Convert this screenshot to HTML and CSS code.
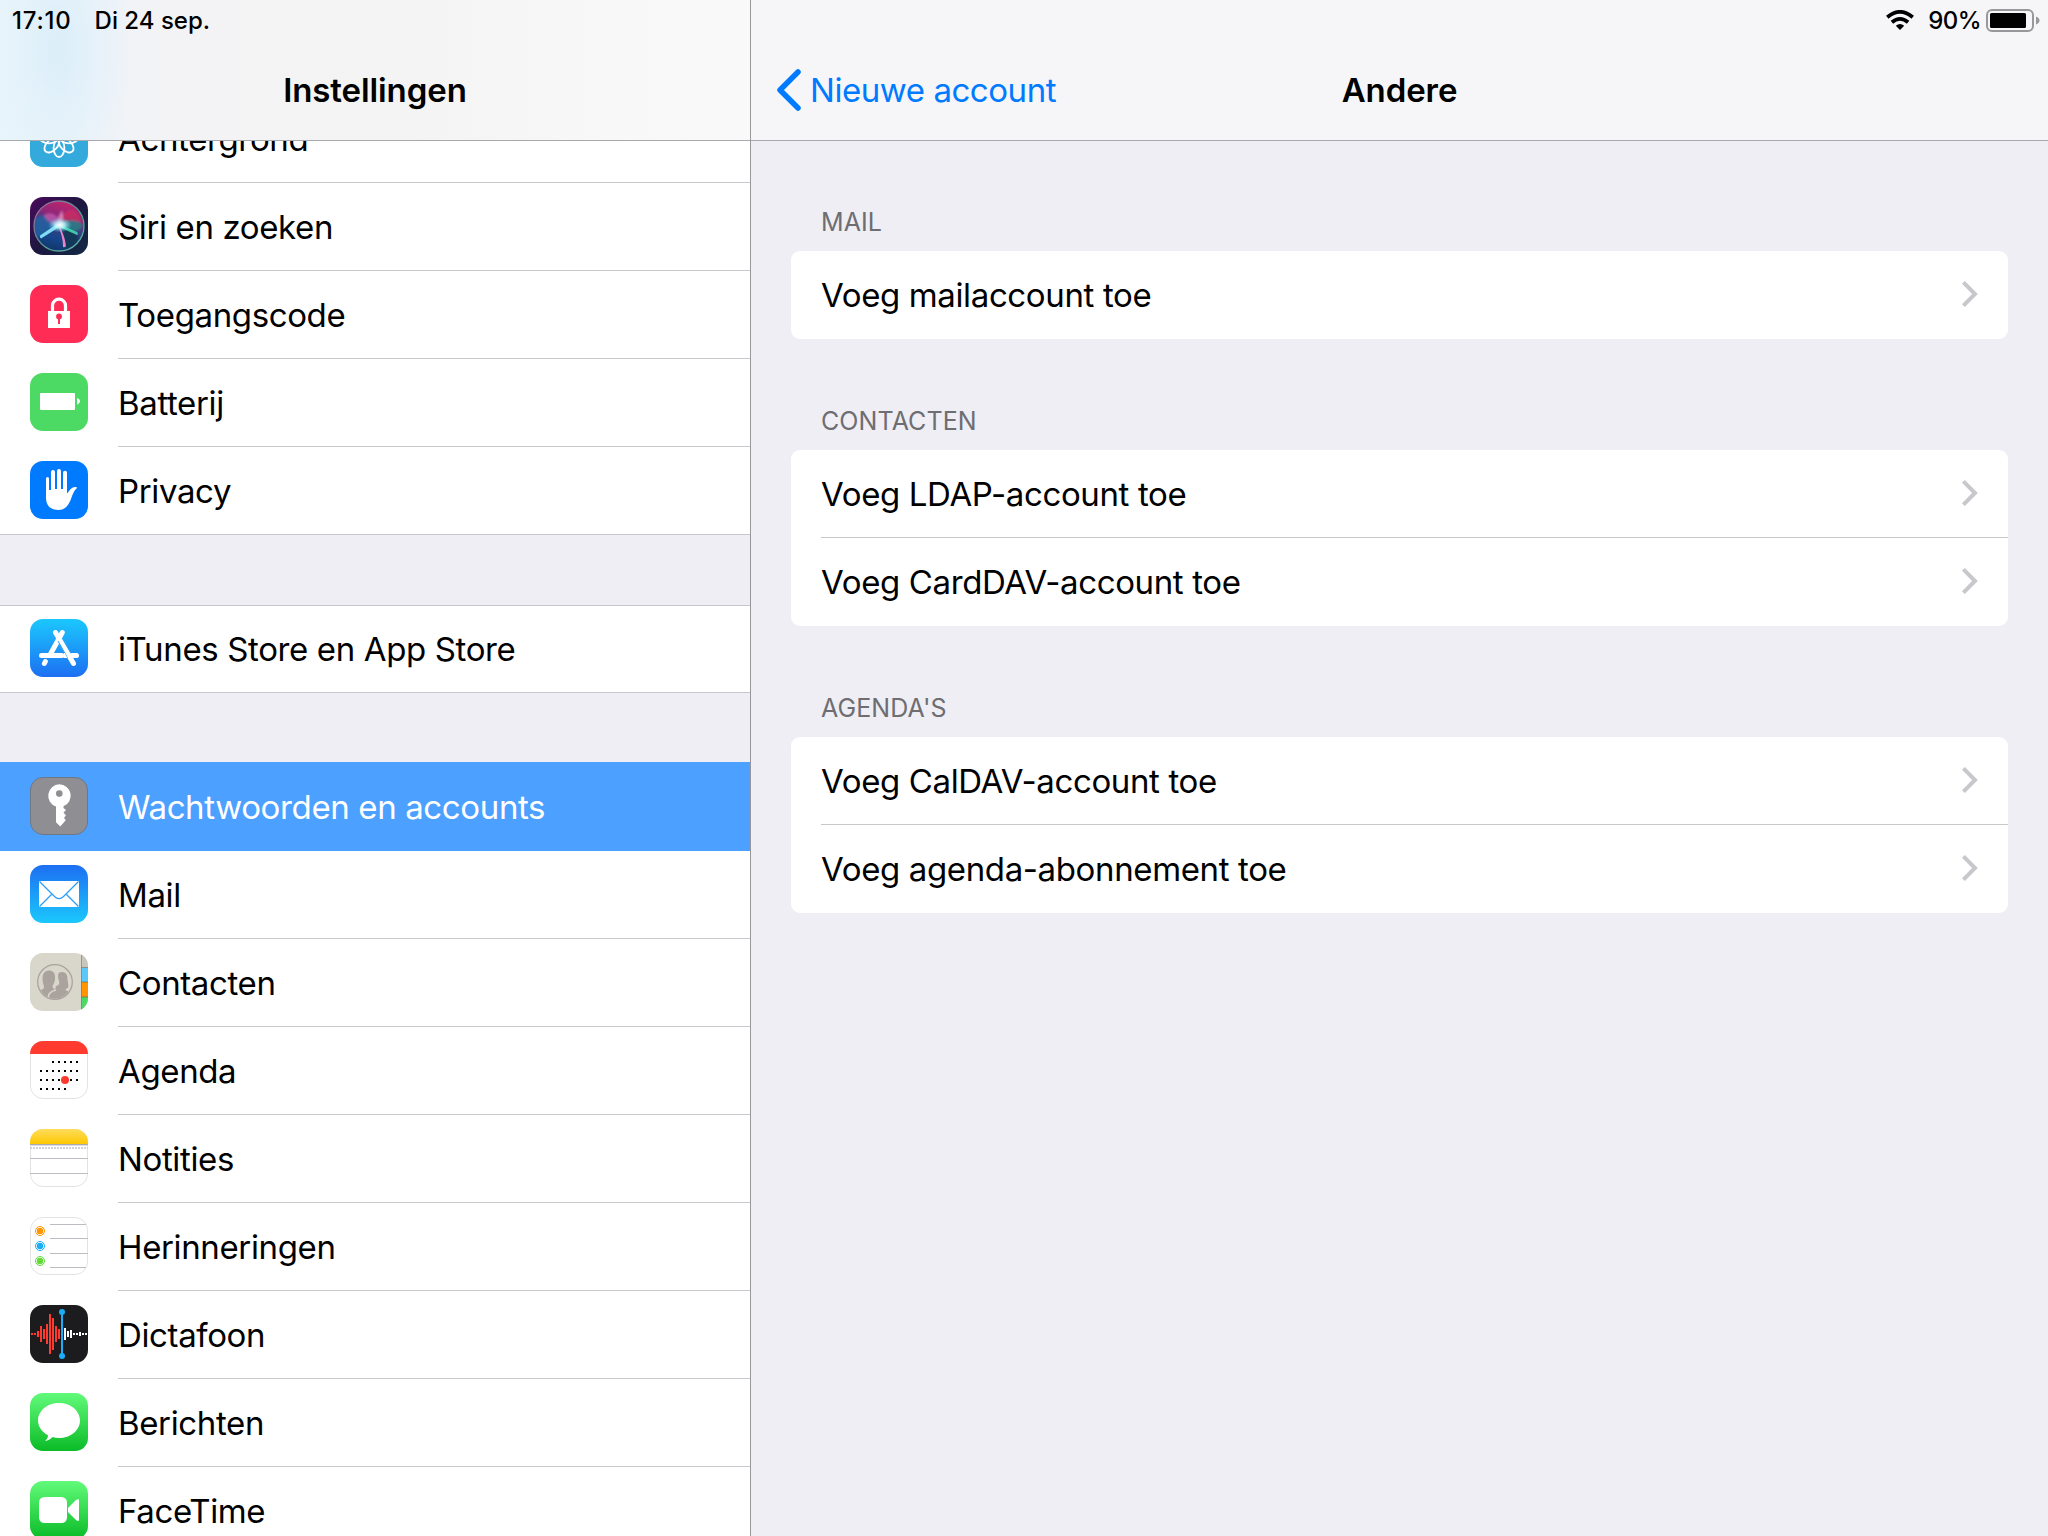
FILE: index.html
```html
<!DOCTYPE html>
<html lang="nl">
<head>
<meta charset="utf-8">
<title>Instellingen</title>
<link rel="stylesheet" href="styles.css">
</head>
<body>
<svg class="defs" width="0" height="0" aria-hidden="true">
  <defs>
    <linearGradient id="store" x1="0" y1="0" x2="0" y2="1"><stop offset="0" stop-color="#1bc8fd"/><stop offset="1" stop-color="#1d6ff2"/></linearGradient>
    <linearGradient id="mail" x1="0" y1="0" x2="0" y2="1"><stop offset="0" stop-color="#1d6ff2"/><stop offset="1" stop-color="#1bc8fd"/></linearGradient>
    <linearGradient id="green" x1="0" y1="0" x2="0" y2="1"><stop offset="0" stop-color="#61fb7a"/><stop offset="1" stop-color="#0bbb27"/></linearGradient>
    <linearGradient id="yellow" x1="0" y1="0" x2="0" y2="1"><stop offset="0" stop-color="#ffdc5c"/><stop offset="1" stop-color="#fec802"/></linearGradient>
    <linearGradient id="siri-bg" x1="0" y1="0" x2="1" y2="1"><stop offset="0" stop-color="#4a0a5c"/><stop offset=".5" stop-color="#1d1740"/><stop offset="1" stop-color="#122a45"/></linearGradient>
    <linearGradient id="siri-orb" x1=".65" y1="0" x2=".35" y2="1"><stop offset="0" stop-color="#c4246c"/><stop offset=".3" stop-color="#8f2678"/><stop offset=".5" stop-color="#3a3f80"/><stop offset=".75" stop-color="#16468c"/><stop offset="1" stop-color="#103468"/></linearGradient>
    <linearGradient id="siri-ring" x1="0" y1="0" x2="1" y2="1"><stop offset="0" stop-color="#a3609c"/><stop offset=".6" stop-color="#4f9d8e"/><stop offset="1" stop-color="#62b8b0"/></linearGradient>
    <radialGradient id="siri-glow"><stop offset="0" stop-color="#fff"/><stop offset=".4" stop-color="#c8fbff" stop-opacity=".8"/><stop offset="1" stop-color="#5bd7f0" stop-opacity="0"/></radialGradient>
    <filter id="siri-soft" x="-10%" y="-10%" width="120%" height="120%"><feGaussianBlur stdDeviation=".8"/></filter>
    <clipPath id="orb"><circle cx="29" cy="29" r="24.500"/></clipPath>
    <clipPath id="tile"><rect width="58" height="58" rx="13"/></clipPath>
    <clipPath id="portrait"><circle cx="25" cy="29" r="16.5"/></clipPath>
  </defs>
</svg>

<main class="screen">
  <aside class="sidebar">
    <header class="bar bar-side">
      <div class="status"><span class="clock">17:10</span><span>Di 24 sep.</span></div>
      <h1 class="title">Instellingen</h1>
    </header>
    <nav class="list">
      <ul class="group group-first">
        <li class="item"><svg class="icon" viewBox="0 0 58 58"><rect width="58" height="58" rx="13" fill="#34aadc"/><g fill="none" stroke="#fff" stroke-width="1.8"><ellipse cx="29" cy="39" rx="5.4" ry="9"/><ellipse cx="29" cy="39" rx="5.4" ry="9" transform="rotate(45 29 29)"/><ellipse cx="29" cy="39" rx="5.4" ry="9" transform="rotate(90 29 29)"/><ellipse cx="29" cy="39" rx="5.4" ry="9" transform="rotate(135 29 29)"/><ellipse cx="29" cy="39" rx="5.4" ry="9" transform="rotate(180 29 29)"/><ellipse cx="29" cy="39" rx="5.4" ry="9" transform="rotate(225 29 29)"/><ellipse cx="29" cy="39" rx="5.4" ry="9" transform="rotate(270 29 29)"/><ellipse cx="29" cy="39" rx="5.4" ry="9" transform="rotate(315 29 29)"/></g></svg><span class="label">Achtergrond</span></li>
        <li class="item"><svg class="icon" viewBox="0 0 58 58"><rect width="58" height="58" rx="13" fill="url(#siri-bg)"/><circle cx="29" cy="29" r="25" fill="url(#siri-orb)"/><g clip-path="url(#orb)"><g filter="url(#siri-soft)"><path d="M29 27C39 22 48 22 53 28c0 6-12 9-22 3z" fill="#1f8f86" opacity=".7"/><path d="M31 30c8 2 16 6 18 11-5 13-13 14-16 6z" fill="#12324e" opacity=".8"/><path d="M4 24c4-6 10-7 13-4l12 9-20 12c-4-4-6-10-5-17z" fill="#2466a4" opacity=".75"/><path d="M14 18c8-5 16 2 18 10-8 0-16-3-18-10z" fill="#d85fb4" opacity=".65"/><path d="M28 27c2-9 10-17 17-13 5 4 6 8 6 11-8-3-15-2-23 2z" fill="#d4305c" opacity=".65"/><path d="M29 28c-2-4-1-9 3-15 1 5 2 10-1 15z" fill="#ffb0e0" opacity=".6"/></g><path d="M31 29L11 41.500q-1.500-1-1-3L27 27z" fill="#8cecff" opacity=".9"/><path d="M29 27l18 8q2 2 0 3L29 30z" fill="#4af0bd" opacity=".75"/><path d="M29 28c3 6 6 12 7 21q-1.500 2-3 1c0-8-2-14-5-22z" fill="#ff8bd2" opacity=".9"/></g><ellipse cx="30" cy="28" rx="12" ry="7.500" fill="url(#siri-glow)"/><circle cx="29" cy="29" r="25" fill="none" stroke="url(#siri-ring)" stroke-width="1.300"/></svg><span class="label">Siri en zoeken</span></li>
        <li class="item"><svg class="icon" viewBox="0 0 58 58"><rect width="58" height="58" rx="13" fill="#ff2d55"/><path d="M22.500 27V20.500a6.500 6.300 0 0 1 13 0V27" fill="none" stroke="#fff" stroke-width="3.200"/><path d="M18 26h22v17H18z" fill="#fff"/><circle cx="29" cy="31.500" r="2.900" fill="#ff2d55"/><path d="M28 32h2v7h-2z" fill="#ff2d55"/></svg><span class="label">Toegangscode</span></li>
        <li class="item"><svg class="icon" viewBox="0 0 58 58"><rect width="58" height="58" rx="13" fill="#4cd964"/><rect x="10" y="20" width="35" height="17" rx="1" fill="#fff"/><path d="M47 25q3 1 3 3.300t-3 3.400z" fill="#fff"/></svg><span class="label">Batterij</span></li>
        <li class="item"><svg class="icon" viewBox="0 0 58 58"><rect width="58" height="58" rx="13" fill="#007aff"/><path d="M16 17.500a1.500 1.500 0 0 1 3 0V29h2V11a2 2 0 0 1 4 0v17h2V10a2 2 0 0 1 4 0v18h2V11.700a2 2 0 0 1 4 0V32.500c2.500-2.500 4-6.500 8-6.500 2.500 0 2.500 1 1.500 1.500-2 1.500-3.500 5-5 9C39 44 35.500 49 28.500 49 20 49 16 44 16 37z" fill="#fff"/></svg><span class="label">Privacy</span></li>
      </ul>
      <ul class="group">
        <li class="item"><svg class="icon" viewBox="0 0 58 58"><rect width="58" height="58" rx="13" fill="url(#store)"/><g fill="none" stroke="#fff" stroke-width="5" stroke-linecap="round"><path d="M32.300 13.500L20.500 35"/><path d="M11.500 36.500H32"/><path d="M42 36.500h4.500"/><path d="M15.400 42.500l-1 2"/><path d="M25.500 13.500l18 31"/></g><path d="M30.400 20.500l9.200 16.500" stroke="#1b96f8" stroke-width="1" transform="translate(-2.300 1.600)"/><path d="M34 34v5h3.400l-2.700-5z" fill="#fff"/></svg><span class="label">iTunes Store en App Store</span></li>
      </ul>
      <ul class="group group-open">
        <li class="item item-selected"><svg class="icon" viewBox="0 0 58 58"><rect x=".5" y=".5" width="57" height="57" rx="12.500" fill="#8e8e93" stroke="#6f7785"/><path fill-rule="evenodd" d="M29.300 7.300a11.400 11.400 0 0 1 4.200 22V31l2.500 2-2.500 2.500 2.500 3-2 2.200 1.700 2.600-5.400 6.200-4.300-4.200V29.500A11.400 11.400 0 0 1 29.300 7.300zm0 6a3.300 3.300 0 1 0 0 6.600 3.300 3.300 0 0 0 0-6.600z" fill="#fff"/></svg><span class="label">Wachtwoorden en accounts</span></li>
        <li class="item"><svg class="icon" viewBox="0 0 58 58"><rect width="58" height="58" rx="13" fill="url(#mail)"/><path d="M9 16h40v26H9z" fill="#fff"/><path d="M9.500 16.500L24.500 31.500q4.500 4.300 9 0L48.500 16.500M9.500 41.500L21.500 29.500M48.500 41.500L36.500 29.500" fill="none" stroke="#2b9df8" stroke-width="1.300"/></svg><span class="label">Mail</span></li>
        <li class="item"><svg class="icon" viewBox="0 0 58 58"><g clip-path="url(#tile)"><path d="M0 0h58v58H0z" fill="#d9d6cc"/><path d="M51 0h7v15h-7z" fill="#c8c5bb"/><path d="M51 15h7v14h-7z" fill="#5ac8fa"/><path d="M51 29h7v15h-7z" fill="#ff9500"/><path d="M51 44h7v14h-7z" fill="#4cd964"/><path d="M51 14.500h7M51 29h7M51 44h7" stroke="#555" stroke-opacity=".5"/><path d="M51.500 2v54" stroke="#777" stroke-opacity=".6"/></g><g fill="#aaa39d" clip-path="url(#portrait)"><path d="M26 33c5-1 3-5 2.300-7.500C27.500 20 29 19 32 19c4 0 5.500 3 5.500 7 0 3 2.500 9-1 9.500-1.500.500-1 2 1 2.500 4 1 5 5 5 10H22z"/><path d="M19 17.500c4 0 6.500 2.500 6 8 0 3-1 5-2 6.500-1 2 0 4 3 5 4 1.500 6 5 6 12H5V39c4-2 9-2 9-5 0-2-1.500-4-1.500-8 0-5 2-8.500 6.500-8.500z"/></g><path d="M18 46c0-6 3-8 8-9" fill="none" stroke="#d9d6cc" stroke-width="1.500"/><circle cx="25" cy="29" r="17.300" fill="none" stroke="#aaa39d" stroke-width="1.300"/></svg><span class="label">Contacten</span></li>
        <li class="item"><svg class="icon" viewBox="0 0 58 58"><rect x=".5" y=".5" width="57" height="57" rx="12.500" fill="#fff" stroke="#e3e3e3"/><path d="M0 13A13 13 0 0 1 13 0h32a13 13 0 0 1 13 13z" fill="#ff3b30"/><path d="M22 21h26M10 30h38M10 39h38M10 48h26" stroke="#000" stroke-width="2" stroke-dasharray="2 4"/><circle cx="35" cy="39" r="4" fill="#ff3b30"/></svg><span class="label">Agenda</span></li>
        <li class="item"><svg class="icon" viewBox="0 0 58 58"><rect x=".5" y=".5" width="57" height="57" rx="12.500" fill="#fff" stroke="#e3e3e3"/><path d="M0 15v-2A13 13 0 0 1 13 0h32a13 13 0 0 1 13 13v2z" fill="url(#yellow)"/><path d="M0 15.500h58" stroke="#a9a9b0"/><path d="M0 16.500h58" stroke="#ddd"/><path d="M0 19h58" stroke="#d2d2d2" stroke-width="2" stroke-dasharray="2 1"/><path d="M0 29.500h58M0 44.500h58" stroke="#bcbcc2"/></svg><span class="label">Notities</span></li>
        <li class="item"><svg class="icon" viewBox="0 0 58 58"><rect x=".5" y=".5" width="57" height="57" rx="12.500" fill="#fff" stroke="#e3e3e3"/><path d="M20 7.500h36M20 21.500h38M20 36.500h38M20 50.500h36" stroke="#bcbcc2"/><g fill="none"><circle cx="10" cy="14" r="4.500" stroke="#ff9500"/><circle cx="10" cy="29" r="4.500" stroke="#1badf8"/><circle cx="10" cy="44" r="4.500" stroke="#63da38"/></g><circle cx="10" cy="14" r="3.200" fill="#ff9500"/><circle cx="10" cy="29" r="3.200" fill="#1badf8"/><circle cx="10" cy="44" r="3.200" fill="#63da38"/></svg><span class="label">Herinneringen</span></li>
        <li class="item"><svg class="icon" viewBox="0 0 58 58"><rect width="58" height="58" rx="13" fill="#1c1c1e"/><path d="M2 28v2M5 28v2M8 26v6M11 21v16M14 24v10M17 19v20M20 9v40M23 13v32M26 21v16M29 24v10" stroke="#ff3b30" stroke-width="2"/><path d="M35 23v12M38 26v6M41 25v8M44 28v2M47 28v2M50 27v4M53 28v2M56 28v2" stroke="#fff" stroke-width="2"/><path d="M32 7v44" stroke="#1badf8" stroke-width="2"/><circle cx="32" cy="7" r="3" fill="#1badf8"/><circle cx="32" cy="51" r="3" fill="#1badf8"/></svg><span class="label">Dictafoon</span></li>
        <li class="item"><svg class="icon" viewBox="0 0 58 58"><rect width="58" height="58" rx="13" fill="url(#green)"/><path d="M29 10c11.600 0 21 7.800 21 17.500S40.600 45 29 45c-2.300 0-4.500-.300-6.500-.900-2 2.300-4.500 3.900-7.500 3.900 1.800-1.500 3-3.500 3-5.800-6-3.200-10-8.600-10-14.700C8 17.800 17.400 10 29 10z" fill="#fff"/></svg><span class="label">Berichten</span></li>
        <li class="item"><svg class="icon" viewBox="0 0 58 58"><rect width="58" height="58" rx="13" fill="url(#green)"/><rect x="9" y="16" width="28" height="26" rx="5.500" fill="#fff"/><path d="M38 27l7.500-7.500q3.500-3 3.500 0v19q0 3-3.500 0L38 31z" fill="#fff"/></svg><span class="label">FaceTime</span></li>
      </ul>
    </nav>
  </aside>

  <section class="detail">
    <header class="bar bar-detail">
      <div class="status status-right">
        <svg class="wifi" width="28" height="20" viewBox="0 0 28 20"><g fill="none" stroke="#000" stroke-width="3.800"><path d="M1.300 7.300q12.700-10.800 25.400 0"/><path d="M5.900 12.300q8.100-6.800 16.200 0"/></g><path d="M14 19.900l-4.200-4.200q4.200-3.200 8.400 0z"/></svg>
        <span class="percent">90%</span>
        <svg class="battery" width="54" height="23" viewBox="0 0 54 23"><rect x="1" y="1" width="46" height="21" rx="5" fill="none" stroke="#98989b" stroke-width="2"/><rect x="4" y="4" width="36" height="15" rx="1.500"/><path d="M50 7.500q3.500 1.500 3.500 4t-3.500 4z" fill="#98989b"/></svg>
      </div>
      <div class="back"><svg class="back-arrow" width="26" height="42" viewBox="0 0 26 42"><path d="M22 3L4 21l18 18" fill="none" stroke="#007aff" stroke-width="5.500" stroke-linecap="round" stroke-linejoin="round"/></svg><span>Nieuwe account</span></div>
      <h2 class="title">Andere</h2>
    </header>
    <div class="sections">
      <h3 class="caption">MAIL</h3>
      <ul class="card">
        <li class="row"><span>Voeg mailaccount toe</span><svg class="chevron" width="16" height="26" viewBox="0 0 16 26"><path d="M1.400 1.400L13 13 1.400 24.600"/></svg></li>
      </ul>
      <h3 class="caption">CONTACTEN</h3>
      <ul class="card">
        <li class="row"><span>Voeg LDAP-account toe</span><svg class="chevron" width="16" height="26" viewBox="0 0 16 26"><path d="M1.400 1.400L13 13 1.400 24.600"/></svg></li>
        <li class="row"><span>Voeg CardDAV-account toe</span><svg class="chevron" width="16" height="26" viewBox="0 0 16 26"><path d="M1.400 1.400L13 13 1.400 24.600"/></svg></li>
      </ul>
      <h3 class="caption">AGENDA'S</h3>
      <ul class="card">
        <li class="row"><span>Voeg CalDAV-account toe</span><svg class="chevron" width="16" height="26" viewBox="0 0 16 26"><path d="M1.400 1.400L13 13 1.400 24.600"/></svg></li>
        <li class="row"><span>Voeg agenda-abonnement toe</span><svg class="chevron" width="16" height="26" viewBox="0 0 16 26"><path d="M1.400 1.400L13 13 1.400 24.600"/></svg></li>
      </ul>
    </div>
  </section>
</main>
</body>
</html>
```

FILE: styles.css
```css
* { box-sizing: border-box; margin: 0; padding: 0; }

body {
  width: 2048px;
  height: 1536px;
  overflow: hidden;
  background: #efeef5;
  color: #000;
  font-family: Inter, "Liberation Sans", sans-serif;
  font-size: 33px;
  letter-spacing: -0.37px;
}

ul { list-style: none; }
.defs { display: block; }

.screen {
  display: grid;
  grid-template-columns: 751px 1fr;
  height: 1536px;
}

.sidebar {
  display: flex;
  flex-direction: column;
  height: 1536px;
  overflow: hidden;
  border-right: 1px solid #98979c;
}

.bar {
  display: grid;
  grid-template-rows: 40px 100px;
  flex: none;
  height: 141px;
  border-bottom: 1px solid #a9a9ad;
}

.bar-side {
  background:
    radial-gradient(ellipse 75px 150px at 58px 50px, rgba(218, 237, 249, 0.9) 0%, rgba(224, 240, 250, 0.55) 50%, rgba(236, 243, 250, 0) 100%),
    linear-gradient(90deg, #e9f5fb 0, #e9f4fa 60px, #eff3f8 105px, #f3f3f5 160px, #f4f4f4 420px, #f8f8f8 600px, #f9f9f9 100%);
}

.bar-detail {
  grid-template-columns: 1fr auto 1fr;
  background: #f6f6f8;
}

.status {
  display: flex;
  gap: 23px;
  padding-left: 12px;
  font-size: 24px;
  font-weight: 500;
  line-height: 41px;
  letter-spacing: 0;
}

.clock { letter-spacing: 0.8px; }

.status-right {
  grid-column: 1 / -1;
  justify-content: flex-end;
  align-items: center;
  gap: 0;
  padding-right: 8px;
}

.wifi { margin-right: 14px; }

.percent {
  margin-right: 5px;
  letter-spacing: -0.6px;
}

.title {
  text-align: center;
  font-size: 33px;
  font-weight: 600;
  line-height: 100px;
  letter-spacing: -0.1px;
}

.back {
  display: flex;
  align-items: center;
  gap: 8px;
  padding-left: 25px;
  color: #007aff;
  letter-spacing: -0.45px;
}

.bar-detail .title { grid-column: 2; }

.list {
  display: flex;
  flex-direction: column;
  gap: 70px;
  flex: 1;
  min-height: 0;
  overflow: hidden;
}

.group {
  flex: none;
  background: #fff;
  border-bottom: 1px solid #c8c7cc;
  box-shadow: inset 0 1px #c8c7cc;
}

/* The list is scrolled so that its first row sits partly under the bar. */
.group-first {
  margin-top: -46px;
  box-shadow: none;
}

.group-open { border-bottom: 0; box-shadow: none; }

.item {
  display: grid;
  grid-template-columns: 58px 1fr;
  column-gap: 30px;
  height: 88px;
  padding: 14px 0 0 30px;
}

.item:last-child { height: 87px; }
.icon { width: 58px; height: 58px; }

.label {
  height: 74px;
  line-height: 61px;
  border-bottom: 1px solid #c8c7cc;
  white-space: nowrap;
}

.item:last-child .label { border-bottom: 0; }

.item-selected {
  background: #4ca0ff;
  color: #fff;
  box-shadow: 0 -1px #4ca0ff;
}

.item-selected .label { border-bottom: 0; }

.sections {
  display: flex;
  flex-direction: column;
  padding: 0 40px;
}

.caption {
  height: 111px;
  padding: 66px 0 0 30px;
  color: #6d6d72;
  font-size: 25px;
  font-weight: 400;
  line-height: 32px;
  letter-spacing: 0.1px;
}

.caption:first-child { height: 110px; padding-top: 65px; }

.card {
  padding-left: 30px;
  border-radius: 9px;
  background: #fff;
}

.row {
  display: flex;
  justify-content: space-between;
  align-items: center;
  height: 88px;
  padding-right: 30px;
  border-bottom: 1px solid #c8c7cc;
}

.row:last-child { border-bottom: 1px solid transparent; }

.chevron {
  margin-bottom: 1px;
  fill: none;
  stroke: #c7c7cc;
  stroke-width: 4;
}
```
